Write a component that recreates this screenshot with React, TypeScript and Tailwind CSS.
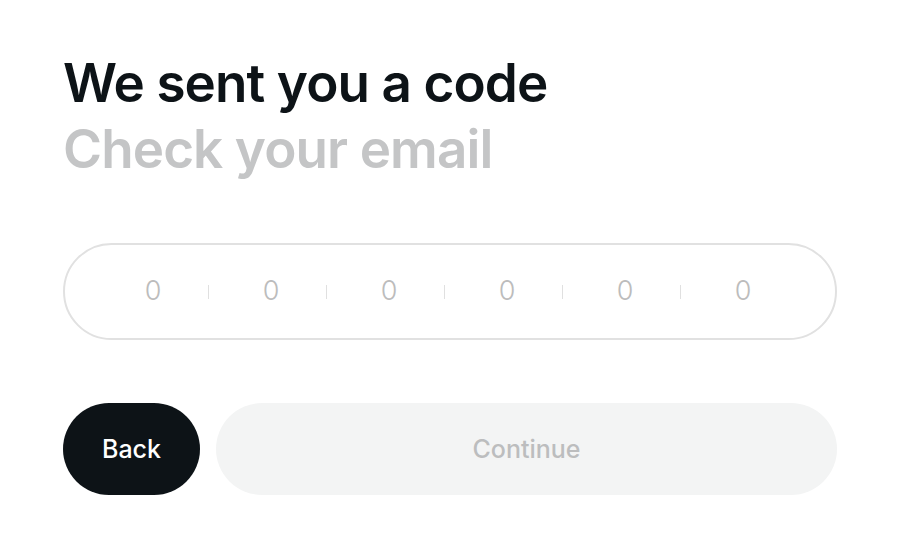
import React from "react";

export default function App() {
  const digits = [0, 1, 2, 3, 4, 5];
  return (
    <div
      className="w-[900px] h-[558px] bg-white px-[63px] pt-[50px]"
      style={{ fontFamily: "Inter, 'Noto Sans', sans-serif" }}
    >
      <h1 className="text-[53px] leading-[66px] font-semibold tracking-[-0.9px] text-[#0d1317]">
        We sent you a code
        <br />
        <span className="text-[#c4c5c6]">Check your email</span>
      </h1>
      <div className="mt-[61px] h-[97px] w-[774px] rounded-full border-2 border-[#e1e1e1] flex items-center pl-[33px]">
        {digits.map((d) => (
          <div key={d} className="flex items-center">
            <span className="w-[110px] text-center text-[27px] font-light text-[#bcbcbc]">0</span>
            {d < 5 && <span className="w-px h-[14px] bg-[#e0e0e0] mr-[7px]" />}
          </div>
        ))}
      </div>
      <div className="mt-[63px] flex gap-[16px]">
        <button className="h-[92px] w-[137px] rounded-full bg-[#0d1317] text-white text-[25px] font-medium pt-[2px]">
          Back
        </button>
        <button className="h-[92px] flex-1 rounded-full bg-[#f3f4f4] text-[#bcbdbe] text-[25px] font-medium pt-[2px]">
          Continue
        </button>
      </div>
    </div>
  );
}
